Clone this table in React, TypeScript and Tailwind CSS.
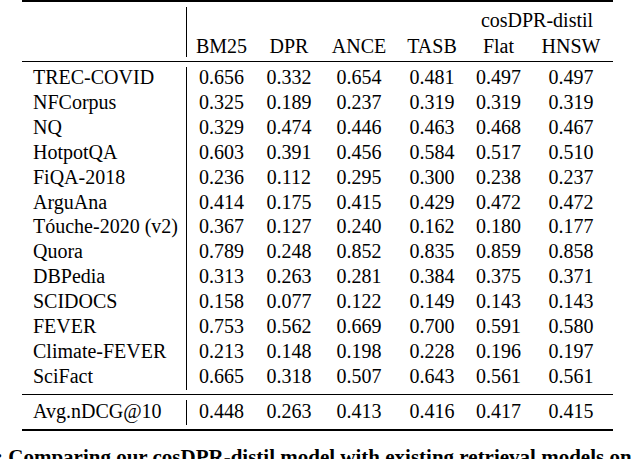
import React from 'react';

const cols = ['BM25', 'DPR', 'ANCE', 'TASB', 'Flat', 'HNSW'];

const rows: [string, string[]][] = [
  ['TREC-COVID', ['0.656', '0.332', '0.654', '0.481', '0.497', '0.497']],
  ['NFCorpus', ['0.325', '0.189', '0.237', '0.319', '0.319', '0.319']],
  ['NQ', ['0.329', '0.474', '0.446', '0.463', '0.468', '0.467']],
  ['HotpotQA', ['0.603', '0.391', '0.456', '0.584', '0.517', '0.510']],
  ['FiQA-2018', ['0.236', '0.112', '0.295', '0.300', '0.238', '0.237']],
  ['ArguAna', ['0.414', '0.175', '0.415', '0.429', '0.472', '0.472']],
  ['Tóuche-2020 (v2)', ['0.367', '0.127', '0.240', '0.162', '0.180', '0.177']],
  ['Quora', ['0.789', '0.248', '0.852', '0.835', '0.859', '0.858']],
  ['DBPedia', ['0.313', '0.263', '0.281', '0.384', '0.375', '0.371']],
  ['SCIDOCS', ['0.158', '0.077', '0.122', '0.149', '0.143', '0.143']],
  ['FEVER', ['0.753', '0.562', '0.669', '0.700', '0.591', '0.580']],
  ['Climate-FEVER', ['0.213', '0.148', '0.198', '0.228', '0.196', '0.197']],
  ['SciFact', ['0.665', '0.318', '0.507', '0.643', '0.561', '0.561']],
];

const avg = ['0.448', '0.263', '0.413', '0.416', '0.417', '0.415'];

const grid = 'grid grid-cols-[69px_66px_74px_72px_61px_84px] text-center';

export default function App() {
  return (
    <div className="w-[640px] h-[459px] overflow-hidden bg-white text-black text-[20px] font-['Liberation_Serif',serif]">
      <div className="ml-[22px] w-[591px]">
        {/* top rule */}
        <div className="h-[2px] bg-black" />

        {/* header */}
        <div className="flex pt-[6px] pb-[2px]">
          <div className="w-[164px]" />
          <div className="w-px bg-black -mt-px mb-[2px]" />
          <div className="leading-[25px]">
            <div className={grid + ' mb-px'}>
              <div className="col-start-5 col-span-2 pr-[7px]">cosDPR-distil</div>
            </div>
            <div className={grid}>
              {cols.map((c) => (
                <div key={c}>{c}</div>
              ))}
            </div>
          </div>
        </div>

        {/* mid rule */}
        <div className="h-px bg-black" />

        {/* datasets */}
        <div className="flex pt-[3px] pb-[5px]">
          <div className="w-[164px] pl-[11px] leading-[24.9px]">
            {rows.map(([name]) => (
              <div key={name}>{name}</div>
            ))}
          </div>
          <div className="w-px bg-black mt-[2px] -mb-px" />
          <div className="leading-[24.9px]">
            {rows.map(([name, vals]) => (
              <div key={name} className={grid}>
                {vals.map((v, i) => (
                  <div key={i}>{v}</div>
                ))}
              </div>
            ))}
          </div>
        </div>

        {/* mid rule */}
        <div className="h-px bg-black" />

        {/* average */}
        <div className="flex pt-[4px] pb-[5px] leading-[25px]">
          <div className="w-[164px] pl-[11px]">Avg.nDCG@10</div>
          <div className="w-px bg-black mt-px -mb-px" />
          <div className={grid}>
            {avg.map((v, i) => (
              <div key={i}>{v}</div>
            ))}
          </div>
        </div>

        {/* bottom rule */}
        <div className="h-[2px] bg-black" />
      </div>

      {/* caption, cut off by the frame as in the source */}
      <p className="mt-[14px] -ml-[4px] whitespace-nowrap font-bold text-[21px] leading-[25px]">
        : Comparing our cosDPR-distil model with existing retrieval models on
      </p>
    </div>
  );
}
